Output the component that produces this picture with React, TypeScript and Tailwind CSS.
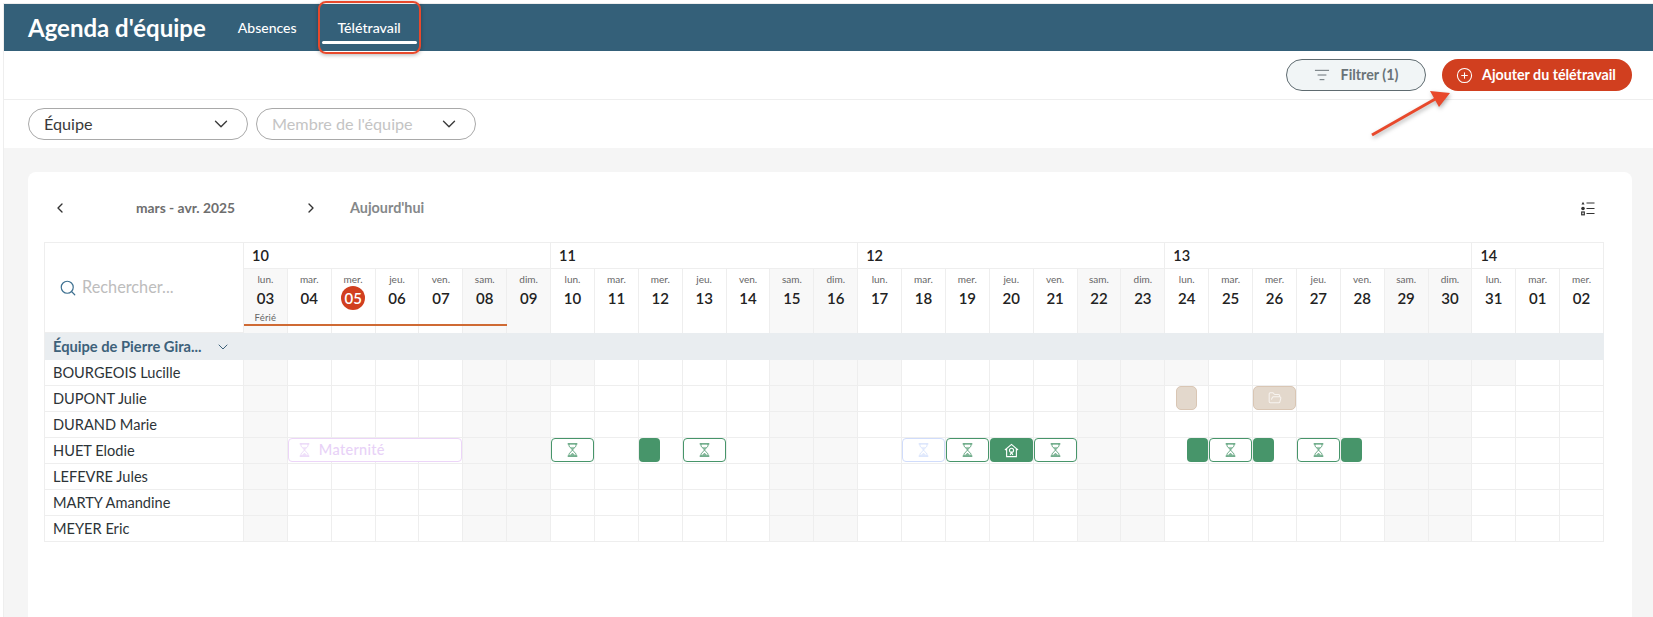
import { ChevronDown, ChevronLeft, ChevronRight, CirclePlus, FolderOpen, ListFilter, Search } from "lucide-react";
import type { ReactNode } from "react";

const labels = ["lun.", "mar.", "mer.", "jeu.", "ven.", "sam.", "dim."];
const nums = ["03","04","05","06","07","08","09","10","11","12","13","14","15","16","17","18","19","20","21","22","23","24","25","26","27","28","29","30","31","01","02"];
const weeks = [
  { n: "10", span: "col-span-7" },
  { n: "11", span: "col-span-7" },
  { n: "12", span: "col-span-7" },
  { n: "13", span: "col-span-7" },
  { n: "14", span: "col-span-3" },
];
const people = ["BOURGEOIS Lucille", "DUPONT Julie", "DURAND Marie", "HUET Elodie", "LEFEVRE Jules", "MARTY Amandine", "MEYER Eric"];

function Hourglass({ className }: { className: string }) {
  return (
    <svg viewBox="0 0 12 16" className={className} fill="none" stroke="currentColor" strokeWidth="0.9">
      <path d="M0.500 1h11M0.500 15h11" strokeWidth="1.4" />
      <path d="M2 1v2.500L6 8l4 4.500V15M10 1v2.500L6 8l-4 4.500V15" />
      <path d="M3.500 14 6 11.500 8.500 14z" fill="currentColor" fillOpacity="0.6" strokeWidth="0.5" />
      <path d="M4 5h4L6 7z" fill="currentColor" fillOpacity="0.6" strokeWidth="0.3" />
    </svg>
  );
}

function HomeIcon() {
  return (
    <svg viewBox="0 0 16 16" className="h-[15px] w-[15px] text-white" fill="none" stroke="currentColor" strokeWidth="1.2">
      <path d="M1 7.500 8 1.500l7 6M2.800 6.200v8.300h10.400V6.200" />
      <circle cx="8" cy="7.800" r="2.200" />
      <path d="M6.500 12.800 8 10l1.500 2.800" />
    </svg>
  );
}

function ListIcon() {
  return (
    <svg viewBox="0 0 14 15" className="h-[15px] w-[14px] text-[#333]" fill="none" stroke="currentColor">
      <path d="M2 .8 3.500 3.500H.5z" fill="currentColor" stroke="none" />
      <circle cx="2" cy="7.500" r="1.800" fill="currentColor" stroke="none" />
      <rect x=".7" y="11" width="2.600" height="2.800" strokeWidth="1.200" />
      <path d="M5.500 2h8M5.500 7.500h8M5.500 12.500h8" strokeWidth="1.200" />
    </svg>
  );
}

function chipFor(row: number, idx: number): ReactNode {
  const green = "absolute top-0 z-10 flex h-[24px] items-center justify-center rounded-[4px]";
  const outline = `${green} left-0 w-[43px] border border-[#47956a] bg-white`;
  const solid = `${green} w-[21px] bg-[#47956a]`;
  const tan = "absolute top-0 z-10 flex h-[24px] items-center justify-center rounded-[5px] border border-[#d9c6b4] bg-[#e3d8cc]";
  const glass = <Hourglass className="h-[14px] w-[11px] text-[#47956a]" />;
  if (row === 1 && idx === 21) return <div className={`${tan} left-[11px] w-[21px]`} />;
  if (row === 1 && idx === 23)
    return (
      <div className={`${tan} left-0 w-[43px]`}>
        <FolderOpen size={14} className="text-[#f8f4f0]" strokeWidth={1.75} />
      </div>
    );
  if (row !== 3) return null;
  if (idx === 1)
    return (
      <div className="absolute left-0 top-0 z-10 flex h-[24px] w-[174px] items-center rounded-[4px] border border-[#ecd5f8] bg-white pl-[10px] text-[14.500px] tracking-[0.3px] text-[#e8d2f7]">
        <Hourglass className="h-[14px] w-[11px] text-[#e8d2f7]" />
        <span className="ml-[9px] font-medium">Maternité</span>
      </div>
    );
  if (idx === 15)
    return (
      <div className={`${green} left-0 w-[43px] border border-[#d0dcfb] bg-white`}>
        <Hourglass className="h-[14px] w-[11px] text-[#d3dffb]" />
      </div>
    );
  if (idx === 7 || idx === 10 || idx === 16 || idx === 18 || idx === 22 || idx === 24) return <div className={outline}>{glass}</div>;
  if (idx === 17)
    return (
      <div className={`${green} left-0 w-[43px] bg-[#47956a]`}>
        <HomeIcon />
      </div>
    );
  if (idx === 9 || idx === 23 || idx === 25) return <div className={`${solid} left-0`} />;
  if (idx === 21) return <div className={`${solid} right-0`} />;
  return null;
}

const isShaded = (idx: number) => idx === 0 || idx % 7 === 5 || idx % 7 === 6;

export default function App() {
  return (
    <div className="relative h-[617px] w-full overflow-hidden bg-white pl-[3px] pt-[3px] [font-family:Lato,sans-serif]">
      <div className="flex h-full flex-col border-l border-t border-[#eeeeee]">
        <header className="flex h-[47px] shrink-0 items-center bg-[#346079] text-white">
          <h1 className="ml-[24px] text-[24px] font-bold leading-none">Agenda d'équipe</h1>
          <span className="ml-[32px] text-[14px] font-medium">Absences</span>
          <div className="relative ml-[25px] flex h-full w-[95px] items-center justify-center text-[14.200px] font-medium">
            Télétravail
            <div className="absolute bottom-[7px] left-0 h-[3px] w-full rounded-full bg-white" />
          </div>
        </header>

        <div className="flex h-[49px] shrink-0 items-center justify-end gap-[16px] border-b border-[#eeeeee] pr-[21px]">
          <button className="flex h-[32px] w-[140px] items-center justify-center gap-[11px] rounded-full border border-[#5f6b70] bg-[#f1f5f6] text-[14.250px] font-bold text-[#6a7378]">
            <ListFilter size={16} strokeWidth={1.5} />
            Filtrer (1)
          </button>
          <button className="flex h-[32px] w-[190px] items-center gap-[9px] rounded-full bg-[#d13f1f] pl-[14px] text-[14.250px] font-bold text-white">
            <CirclePlus size={17} strokeWidth={1.5} />
            Ajouter du télétravail
          </button>
        </div>

        <div className="flex h-[48px] shrink-0 items-center gap-[8px] pl-[24px]">
          <div className="flex h-[32px] w-[220px] items-center justify-between rounded-full border border-[#a9a9a9] pl-[15px] pr-[15px] text-[16.200px] text-[#3a3a3a]">
            Équipe
            <ChevronDown size={22} strokeWidth={1.5} />
          </div>
          <div className="flex h-[32px] w-[220px] items-center justify-between rounded-full border border-[#a9a9a9] pl-[15px] pr-[15px] text-[16.200px] text-[#c4c4c4]">
            Membre de l'équipe
            <ChevronDown size={22} strokeWidth={1.5} className="text-[#3a3a3a]" />
          </div>
        </div>

        <div className="flex min-h-0 flex-1 flex-col bg-[#f5f5f5] pl-[24px] pr-[21px] pt-[24px]">
          <div className="flex-1 rounded-t-lg bg-white pl-[16px]">
            <div className="flex h-[70px] w-[1560px] items-center pl-[8px] pr-[9px] pt-[2px] text-[#6e6e6e]">
              <ChevronLeft size={16} className="text-[#333]" />
              <span className="w-[235px] text-center text-[13.800px] font-bold">mars - avr. 2025</span>
              <ChevronRight size={16} className="text-[#333]" />
              <span className="ml-[31px] text-[14.400px] font-bold text-[#85888a]">Aujourd'hui</span>
              <div className="ml-auto">
                <ListIcon />
              </div>
            </div>

            <div className="grid w-[1560px] grid-cols-[199px_repeat(31,minmax(0,1fr))] grid-rows-[26px_64px_27px_repeat(7,26px)] border-l border-t border-[#eeeeee]">
              <div className="row-span-2 flex items-center border-b border-r border-[#eeeeee] pl-[14px]">
                <Search size={18} className="text-[#3f7191]" strokeWidth={1.6} />
                <span className="ml-[5px] text-[16.300px] text-[#bdbdbd]">Rechercher...</span>
              </div>
              {weeks.map((w) => (
                <div key={w.n} className={`${w.span} flex items-center border-b border-r border-[#eeeeee] pl-[8px] text-[14.500px] font-semibold text-[#222]`}>
                  {w.n}
                </div>
              ))}
              {nums.map((n, idx) => (
                <div key={idx} className={`relative flex flex-col items-center border-r border-[#eeeeee] ${isShaded(idx) ? "bg-[#f8f8f8]" : "bg-white"}`}>
                  <span className="mt-[3px] text-[10px] leading-[14px] text-[#666]">{labels[idx % 7]}</span>
                  <span className={`flex h-[24px] w-[24px] items-center justify-center rounded-full text-[15px] font-semibold ${idx === 2 ? "bg-[#d13f1f] font-bold text-white" : "text-[#222]"}`}>
                    {n}
                  </span>
                  {idx === 0 && <span className="mt-[1px] text-[9.500px] leading-[13px] tracking-[0.2px] text-[#666]">Férié</span>}
                  {idx === 0 && <div className="absolute left-0 top-[55px] z-10 h-[2px] w-[263px] bg-[#cf6a34]" />}
                </div>
              ))}
              <div className="col-span-32 flex items-center bg-[#e9edf0] pl-[8px] text-[14.700px] font-bold text-[#3d617a]">
                <span className="w-[162px]">Équipe de Pierre Gira...</span>
                <ChevronDown size={16} strokeWidth={1.5} />
              </div>
              {people.flatMap((p, row) => [
                <div key={p} className="flex items-center border-b border-r border-[#eeeeee] pl-[8px] text-[14.600px] text-[#2d3438]">
                  {p}
                </div>,
                ...nums.map((_, idx) => (
                  <div
                    key={`${p}-${idx}`}
                    className={`relative border-b border-r border-[#eeeeee] ${isShaded(idx) || (row === 0 && idx % 7 === 0) ? "bg-[#f8f8f8]" : "bg-white"}`}
                  >
                    {chipFor(row, idx)}
                  </div>
                )),
              ])}
            </div>
          </div>
        </div>
      </div>

      <div className="absolute left-[318px] top-[1px] h-[53px] w-[103px] rounded-[8px] border-2 border-[#e8492c] shadow-[0_1px_4px_rgba(0,0,0,0.3)]" />
      <svg className="absolute left-[1365px] top-[88px] h-[54px] w-[90px] drop-shadow-[1px_2px_2px_rgba(0,0,0,0.3)]" viewBox="0 0 90 54" fill="none">
        <path d="M7 47 72 10" stroke="#e8492c" strokeWidth="3" />
        <path d="M85 5 65 3l9 16z" fill="#e8492c" />
      </svg>
    </div>
  );
}
